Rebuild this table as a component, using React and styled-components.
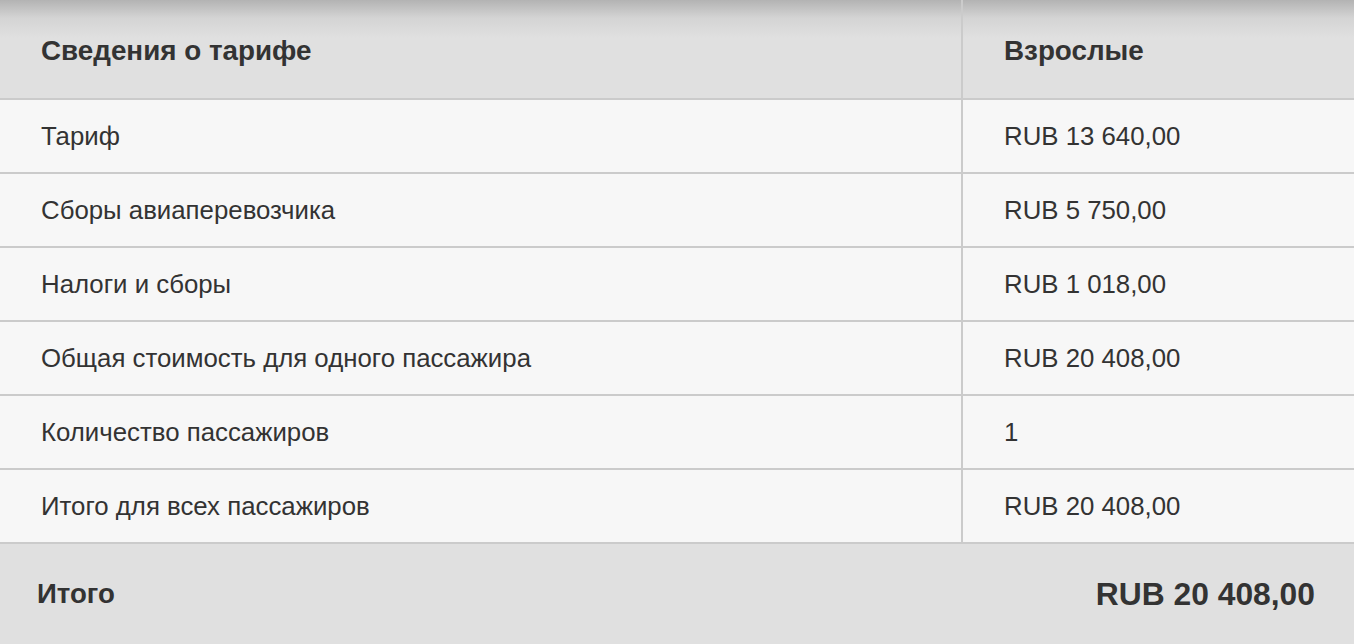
import React from 'react';
import styled, { createGlobalStyle } from 'styled-components';

const GlobalStyle = createGlobalStyle`
    html, body {
        margin: 0;
        padding: 0;
        background: #f7f7f7;
    }
    body {
        font-family: "Liberation Sans", Arial, sans-serif;
        color: #333333;
    }
`;

const rows = [
    ['Тариф', 'RUB 13 640,00'],
    ['Сборы авиаперевозчика', 'RUB 5 750,00'],
    ['Налоги и сборы', 'RUB 1 018,00'],
    ['Общая стоимость для одного пассажира', 'RUB 20 408,00'],
    ['Количество пассажиров', '1'],
    ['Итого для всех пассажиров', 'RUB 20 408,00'],
];

const App = () => {
    return (
        <>
            <GlobalStyle />
            <FareTable>
                <HeadRow>
                    <Cell $head>Сведения о тарифе</Cell>
                    <Cell $head $value>Взрослые</Cell>
                </HeadRow>
                {rows.map(([label, value]) => (
                    <Row key={label}>
                        <Cell>{label}</Cell>
                        <Cell $value>{value}</Cell>
                    </Row>
                ))}
                <TotalBar>
                    <TotalLabel>Итого</TotalLabel>
                    <TotalAmount>RUB 20 408,00</TotalAmount>
                </TotalBar>
            </FareTable>
        </>
    );
};

export default App;

const FareTable = styled.div`
    width: 1354px;
    display: flex;
    flex-direction: column;
`;

const Row = styled.div`
    display: grid;
    grid-template-columns: 963px 1fr;
    height: 74px;
    box-sizing: border-box;
    border-bottom: 2px solid #cbcbcb;
    background: #f7f7f7;
`;

const HeadRow = styled(Row)`
    height: 100px;
    background: linear-gradient(#b3b3b3 0px, #d4d4d4 18px, #e0e0e0 38px, #e0e0e0 100%);
`;

const Cell = styled.div`
    display: flex;
    align-items: center;
    padding-left: 41px;
    font-size: ${p => (p.$head ? '27.8px' : '25.8px')};
    font-weight: ${p => (p.$head ? 700 : 400)};
    ${p => (p.$head ? 'padding-top: 4px;' : '')}
    border-right: ${p => (p.$value ? 'none' : '2px solid #cbcbcb')};
    white-space: nowrap;
`;

const TotalBar = styled.div`
    height: 100px;
    background: #e0e0e0;
    display: flex;
    align-items: center;
    justify-content: space-between;
    padding: 0 39px 0 37px;
    font-weight: 700;
`;

const TotalLabel = styled.div`
    font-size: 27.6px;
`;

const TotalAmount = styled.div`
    font-size: 31.8px;
`;
